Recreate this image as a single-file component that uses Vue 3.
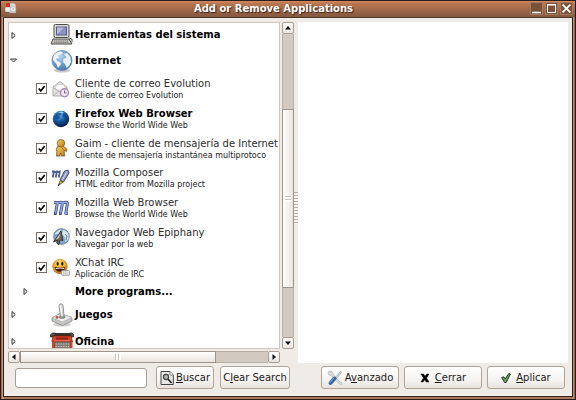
<script setup>
import { ref } from 'vue'

const search = ref('')
const programs = ref([
  { id: 'evolution', name: 'Cliente de correo Evolution', note: 'Cliente de correo Evolution', on: true },
  { id: 'firefox', name: 'Firefox Web Browser', note: 'Browse the World Wide Web', on: true, strong: true },
  { id: 'gaim', name: 'Gaim - cliente de mensajería de Internet', note: 'Cliente de mensajería instantánea multiprotoco', on: true },
  { id: 'composer', name: 'Mozilla Composer', note: 'HTML editor from Mozilla project', on: true },
  { id: 'mozilla', name: 'Mozilla Web Browser', note: 'Browse the World Wide Web', on: true },
  { id: 'epiphany', name: 'Navegador Web Epiphany', note: 'Navegar por la web', on: true },
  { id: 'xchat', name: 'XChat IRC', note: 'Aplicación de IRC', on: true },
])
</script>

<template>
  <div class="window">
    <header class="titlebar">
      <svg class="app-icon" viewBox="0 0 12 12" width="12" height="12" aria-hidden="true">
        <path d="M4 1h5l2 2v8H4z" fill="#ddd9d4" stroke="#8c8580" stroke-width=".6" />
        <rect x="1" y="1" width="4" height="5" fill="#d33226" />
        <rect x="0" y="5" width="6" height="5" rx="1" fill="#eee" stroke="#777" stroke-width=".5" />
        <circle cx="8.2" cy="7" r="2.6" fill="#f5f3f1" stroke="#aaa29c" stroke-width=".6" />
        <circle cx="8.2" cy="7" r=".8" fill="#9a918a" />
      </svg>
      <h1>Add or Remove Applications</h1>
      <div class="controls">
        <button type="button" aria-label="Minimize"><svg viewBox="0 0 11 11" width="11" height="11"><path d="M1 9.500h9" stroke="#fff" stroke-width="1.500" /></svg></button>
        <button type="button" aria-label="Maximize"><svg viewBox="0 0 11 11" width="11" height="11"><path d="M1.500 2v7.500h8V2" fill="none" stroke="#fff" /><path d="M1 1.800h9" stroke="#fff" stroke-width="1.500" /></svg></button>
        <button type="button" aria-label="Close"><svg viewBox="0 0 11 11" width="11" height="11"><path d="M2.200 2.200l6.600 6.600M8.800 2.200l-6.600 6.600" stroke="#fff" stroke-width="1.800" stroke-linecap="square" /></svg></button>
      </div>
    </header>

    <main class="client">
      <div class="panes">
        <section class="browser">
          <ul class="tree">
            <li class="category first">
              <button type="button" class="expander" aria-label="Expand"><svg viewBox="0 0 9 9" width="9" height="9"><path d="M3 1.500v6L6.200 4.500z" fill="#fff" stroke="#333" /></svg></button>
              <svg class="cat-icon" viewBox="0 0 24 24" width="24" height="24" aria-hidden="true">
                <path d="M3 16h16l3 5H1z" fill="#c9c7c3" stroke="#4d4b49" />
                <path d="M4 18h14M4 19.700h15" stroke="#7c7a77" stroke-dasharray="1.500 .6" />
                <path d="M19 15l3 1v3" fill="none" stroke="#555" />
                <rect x="4" y="1.500" width="15" height="13" rx="1.500" fill="#dcdad6" stroke="#4d4b49" />
                <rect x="6.500" y="4" width="10" height="8" fill="#8d92c4" stroke="#5a5d86" />
                <path d="M7 11.500V4.500h7z" fill="#b9bce0" />
              </svg>
              <strong>Herramientas del sistema</strong>
            </li>
            <li class="branch">
              <div class="category">
                <button type="button" class="expander" aria-label="Collapse"><svg viewBox="0 0 9 9" width="9" height="9"><path d="M1.500 3h6L4.500 6z" fill="#fff" stroke="#333" /></svg></button>
                <svg class="cat-icon" viewBox="0 0 24 24" width="24" height="24" aria-hidden="true">
                  <defs>
                    <radialGradient id="net" cx=".4" cy=".3" r=".75"><stop offset="0" stop-color="#b9d6ee" /><stop offset=".55" stop-color="#6c9ccb" /><stop offset="1" stop-color="#3f6ea6" /></radialGradient>
                  </defs>
                  <ellipse cx="12" cy="21.500" rx="8" ry="2" fill="#c9c9c9" />
                  <circle cx="12" cy="11.500" r="10" fill="url(#net)" stroke="#6888ab" stroke-width=".8" />
                  <path d="M3.500 7Q6 2.500 11 2.500L13 4 10 6 8 6.500 9 9 6 9.500 7 12 10 13 11 15 8 19 6.500 15 3 11z" fill="#edf3f8" />
                  <path d="M14 5l3-1 3.500 4 .5 5-2 4-2.500 2L15 15l-2-2 .5-3 3-1.500z" fill="#e8f0f7" />
                </svg>
                <strong>Internet</strong>
              </div>

              <ul class="programs">
                <li v-for="p in programs" :key="p.id">
                  <label class="program">
                    <span class="check">
                      <input v-model="p.on" type="checkbox" />
                      <svg v-if="p.on" viewBox="0 0 11 11" width="11" height="11" aria-hidden="true"><path d="M2.800 5.500l2 2.500L8.700 3" fill="none" stroke="#000" stroke-width="1.700" /></svg>
                    </span>

                    <svg v-if="p.id === 'evolution'" viewBox="0 0 18 18" width="18" height="18" aria-hidden="true">
                      <path d="M1 7l7-5.500L15 7v9H1z" fill="#e4e3e1" stroke="#a09e9b" stroke-width=".8" />
                      <path d="M3.500 7L6 4.500h5L13 7v3H3.500z" fill="#fafafa" stroke="#c5c3c0" stroke-width=".5" />
                      <path d="M1 7.500l7 4.500 7-4.500M1 16l6-5" fill="none" stroke="#aaa8a5" stroke-width=".8" />
                      <circle cx="12.500" cy="12.800" r="4" fill="#eee8f3" stroke="#a58bb0" stroke-width="1.400" />
                      <path d="M12.500 10.500V13h2" fill="none" stroke="#55405e" stroke-width=".8" />
                    </svg>
                    <svg v-else-if="p.id === 'firefox'" viewBox="0 0 18 18" width="18" height="18" aria-hidden="true">
                      <defs>
                        <radialGradient id="fx" cx=".4" cy=".25" r=".75"><stop offset="0" stop-color="#5fb2ec" /><stop offset=".45" stop-color="#1c66b4" /><stop offset="1" stop-color="#06163f" /></radialGradient>
                      </defs>
                      <circle cx="9" cy="9" r="8.200" fill="url(#fx)" />
                      <path d="M2.500 6Q5 2 8 2.500L9.500 4 7.500 6 8 8 5 9.500 3 8z" fill="#0b3774" opacity=".6" />
                      <path d="M12 2.800l3 3-1 3-2.500-1.500L10.500 5zM8 11l4 1 1 2-3 2.500z" fill="#0b3774" opacity=".6" />
                      <path d="M6 2.200l4-.7 2 .7-2 1.300z" fill="#8ed0f5" />
                    </svg>
                    <svg v-else-if="p.id === 'gaim'" viewBox="0 0 18 18" width="18" height="18" aria-hidden="true">
                      <defs>
                        <linearGradient id="gm" x1="0" y1="0" x2="1" y2="1"><stop offset="0" stop-color="#f5cf68" /><stop offset="1" stop-color="#b97a16" /></linearGradient>
                      </defs>
                      <ellipse cx="9" cy="17" rx="5" ry="1" fill="#ccc" />
                      <path d="M5.500 7.500l6-.2 3.500 3-.5 2-2.500-.8.500 5.200H9.700L8.700 14l-1 2.800H4.500l.5-5-1-.800z" fill="url(#gm)" stroke="#77500d" stroke-width=".8" />
                      <circle cx="9" cy="4.200" r="3.700" fill="url(#gm)" stroke="#8c6215" stroke-width=".8" />
                      <path d="M9.500 8.500l2 2" stroke="#77500d" stroke-width=".7" />
                    </svg>
                    <svg v-else-if="p.id === 'composer'" viewBox="0 0 18 18" width="18" height="18" aria-hidden="true">
                      <path d="M0 2.500h1.800l-1 6M1.800 3.500l3-1-1 6M4.800 3.500l3-1-1 6" fill="none" stroke="#4d5e92" stroke-width="1.800" />
                      <path d="M12.500 2l3.500-1L17 4 11.500 13 8 11z" fill="#8792bd" stroke="#353f69" stroke-width=".9" />
                      <path d="M15 2.500L10 11.500" stroke="#dfe4f4" />
                      <path d="M8 11.500L11.200 13l-4.700 3.500z" fill="#e1b23d" stroke="#4c451e" stroke-width=".7" />
                      <path d="M6 17l1.500-2.500" stroke="#222" />
                    </svg>
                    <svg v-else-if="p.id === 'mozilla'" viewBox="0 0 18 18" width="18" height="18" aria-hidden="true">
                      <path d="M2 3.500h3.500L3.500 14.500H2M5 4.500q4-2 5.500-.5L8.500 14.500H7M10 4.500q4-2 5.500-.5L13.800 14.500h2" fill="none" stroke="#33478e" stroke-width="3" stroke-linejoin="round" />
                      <path d="M2 3.500h3.500L3.500 14.500M5 4.500q4-2 5.500-.5L8.500 14.500M10 4.500q4-2 5.500-.5L13.800 14.500h1.500" fill="none" stroke="#96a8e2" stroke-width="1.500" />
                    </svg>
                    <svg v-else-if="p.id === 'epiphany'" viewBox="0 0 18 18" width="18" height="18" aria-hidden="true">
                      <circle cx="9.500" cy="8.500" r="7.800" fill="#86a9cb" stroke="#506c8b" stroke-width=".8" />
                      <path d="M3 6q2-4 6-4.500L7 6zM11 1.500q4 1.500 5.500 5V11l-3 3-1-5L10 6z" fill="#d8e4ee" />
                      <path d="M13 6l2 2-1 4" fill="none" stroke="#5a7ea4" />
                      <path d="M9 3l2 9.500-3-.500-1 4.500-2-1 .5-3.500L1.500 14z" fill="#6c675f" stroke="#26262a" stroke-width=".8" />
                      <path d="M8.500 5l-5 7L7 10z" fill="#d8d0bf" />
                    </svg>
                    <svg v-else viewBox="0 0 18 18" width="18" height="18" aria-hidden="true">
                      <defs>
                        <radialGradient id="xc" cx=".45" cy=".25" r=".8"><stop offset="0" stop-color="#ffe06a" /><stop offset=".6" stop-color="#efa51f" /><stop offset="1" stop-color="#a75f0a" /></radialGradient>
                      </defs>
                      <circle cx="8" cy="8.500" r="7.300" fill="url(#xc)" stroke="#9a6a1d" stroke-width=".5" />
                      <ellipse cx="5.700" cy="5.700" rx="1.100" ry="2" fill="#2b1d08" />
                      <ellipse cx="10.300" cy="5.700" rx="1.100" ry="2" fill="#2b1d08" />
                      <path d="M2.500 8.800q5.500 2 11 0-.8 5-5.500 5t-5.500-5z" fill="#3d1c0b" />
                      <path d="M3.500 9.800q4.500 1.200 9 0l-.5 1.200H4z" fill="#fff" />
                      <rect x="9.500" y="12.500" width="8" height="4.800" rx="1" fill="#eee" stroke="#8c8a88" stroke-width=".8" />
                      <path d="M11 14h5M11 15.800h5" stroke="#999" stroke-width=".8" stroke-dasharray="1.200 .6" />
                    </svg>

                    <span class="text">
                      <span class="name" :class="{ strong: p.strong }">{{ p.name }}</span>
                      <span class="note">{{ p.note }}</span>
                    </span>
                  </label>
                </li>
              </ul>
              <div class="category more">
                <button type="button" class="expander" aria-label="Expand"><svg viewBox="0 0 9 9" width="9" height="9"><path d="M3 1.500v6L6.200 4.500z" fill="#fff" stroke="#333" /></svg></button>
                <strong>More programs...</strong>
              </div>
            </li>
            <li class="category">
              <button type="button" class="expander" aria-label="Expand"><svg viewBox="0 0 9 9" width="9" height="9"><path d="M3 1.500v6L6.200 4.500z" fill="#fff" stroke="#333" /></svg></button>
              <svg class="cat-icon" viewBox="0 0 24 24" width="24" height="24" aria-hidden="true">
                <ellipse cx="12" cy="21.500" rx="9" ry="2" fill="#d0d0d0" />
                <path d="M2 15l8-4.500 12 4v3.500l-9.500 4.500L2 18z" fill="#c7c7c5" stroke="#8a8a88" stroke-width=".8" />
                <path d="M2 15l8-4.500 12 4-9.500 4.500z" fill="#eeeeec" stroke="#9c9c9a" stroke-width=".6" />
                <ellipse cx="12" cy="14" rx="3.500" ry="1.800" fill="#8c8c8a" />
                <path d="M10.500 14L9 3q0-2.200 2-2.200T13.200 3l.8 11z" fill="#d9d9d7" stroke="#828280" stroke-width=".8" />
                <path d="M10.500 2.500l1.300 10" stroke="#fff" />
                <circle cx="7" cy="14.500" r="1.400" fill="#d2564c" />
              </svg>
              <strong>Juegos</strong>
            </li>
            <li class="category">
              <button type="button" class="expander" aria-label="Expand"><svg viewBox="0 0 9 9" width="9" height="9"><path d="M3 1.500v6L6.200 4.500z" fill="#fff" stroke="#333" /></svg></button>
              <svg class="cat-icon" viewBox="0 0 24 24" width="24" height="24" aria-hidden="true">
                <rect x="4" y="3" width="17" height="3" fill="#333" />
                <path d="M.5 7V4.500l2-1.500h3v3h14V3h2.500l1.500 1.500V7h-2V5.500H3V7z" fill="#55504d" stroke="#26221f" stroke-width=".7" />
                <path d="M3 6h18l1.500 6H2z" fill="#d8432a" stroke="#80200f" stroke-width=".8" />
                <path d="M6 7.500h12v2H6z" fill="#8e2212" />
                <path d="M4 11h16" stroke="#f0876f" />
                <path d="M2 12h20.500V24H2z" fill="#d8432a" />
                <path d="M4.500 12h15.500V24H4.500z" fill="#857a73" stroke="#554943" stroke-width=".7" />
                <path d="M5.500 14h14M5.500 16.500h14M5.500 19h14M5.500 21.500h14" stroke="#c9c2bc" stroke-width="1.200" stroke-dasharray="1.500 1" />
              </svg>
              <strong>Oficina</strong>
            </li>
          </ul>

          <div class="vbar">
            <button type="button" aria-label="Up"><svg viewBox="0 0 8 8" width="8" height="8"><path d="M4 2L7 5.500H1z" fill="#111" /></svg></button>
            <div class="track"><div class="thumb"><i></i></div></div>
            <button type="button" aria-label="Down"><svg viewBox="0 0 8 8" width="8" height="8"><path d="M1 2.500h6L4 6z" fill="#111" /></svg></button>
          </div>

          <div class="hbar">
            <button type="button" aria-label="Left"><svg viewBox="0 0 8 8" width="8" height="8"><path d="M5.500 1v6L2 4z" fill="#111" /></svg></button>
            <div class="track"><div class="thumb"><i></i></div></div>
            <button type="button" aria-label="Right"><svg viewBox="0 0 8 8" width="8" height="8"><path d="M2.500 1v6L6 4z" fill="#111" /></svg></button>
          </div>
        </section>
        <div class="splitter"><i></i></div>
        <section class="details" aria-label="Details"></section>
      </div>

      <form class="actions" @submit.prevent>
        <input v-model="search" type="text" aria-label="Buscar" />
        <button type="submit" class="btn find">
          <svg viewBox="0 0 14 14" width="14" height="14" aria-hidden="true">
            <path d="M1 .5h9L13.300 4v9.500H1z" fill="#e9e8e6" stroke="#444" />
            <path d="M10 .5V4h3" fill="#fff" stroke="#666" stroke-width=".7" />
            <circle cx="6" cy="6" r="2.600" fill="#a9b5a8" stroke="#444" stroke-width="1.100" />
            <path d="M8 8l3.500 4" stroke="#222" stroke-width="1.700" />
          </svg>
          <span><u>B</u>uscar</span>
        </button>
        <button type="button" class="btn clear"><span>C<u>l</u>ear Search</span></button>
        <button type="button" class="btn wide push">
          <svg viewBox="0 0 16 16" width="16" height="16" aria-hidden="true">
            <path d="M2 1l3 .5L6 4l7 8 1.500.5.5 2-2.500-.5L4.500 6 2 5l-1-2z" fill="#d6d9dc" stroke="#b1b7bc" stroke-width=".7" />
            <path d="M14.500 1.500l-6 7" stroke="#a6acb2" stroke-width="2" />
            <path d="M14.500 1.500l-6 7" stroke="#e9ecee" stroke-width=".8" />
            <path d="M7.500 8.500L3.500 13" stroke="#3c66a0" stroke-width="4" stroke-linecap="round" />
            <path d="M7 8l-4.500 5" stroke="#7fa5d6" stroke-linecap="round" />
          </svg>
          <span>A<u>v</u>anzado</span>
        </button>
        <button type="button" class="btn wide gap">
          <svg viewBox="0 0 10 10" width="10" height="10" aria-hidden="true"><path d="M1 1h2.500L5 3.200 6.800 1H9L6.500 5 9 9H6.200L4.800 6.700 3 9H1l2.500-4z" fill="#000" stroke="#000" stroke-width=".5" /></svg>
          <span><u>C</u>errar</span>
        </button>
        <button type="button" class="btn wide gap">
          <svg viewBox="0 0 10 10" width="10" height="10" aria-hidden="true"><path d="M.6 4.600l2.200-.8 1.400 2L7.800.5l1.600.6L5.200 9.500H3.600z" fill="#6a9a62" stroke="#1c2a1b" stroke-width=".9" /></svg>
          <span><u>A</u>plicar</span>
        </button>
      </form>
    </main>
  </div>
</template>

<style>
body { margin: 0; }
</style>

<style scoped>
* { box-sizing: border-box; }

.window {
  display: flex;
  flex-direction: column;
  height: 100vh;
  padding: 0 2px 2px;
  border: 1px solid #2a1c18;
  font: 10px/12px "DejaVu Sans", sans-serif;
  color: #1a1a1a;
  background: linear-gradient(90deg, #8a5a44, #dba98a 2px, #a97559 3px, #a97559 calc(100% - 3px), #c99a80 calc(100% - 2px), #8a5a44);
  overflow: hidden;
}
button { font: inherit; color: inherit; padding: 0; margin: 0; }
svg { display: block; flex: none; }
ul { list-style: none; margin: 0; padding: 0; }

.titlebar {
  display: flex;
  align-items: flex-start;
  flex: none;
  height: 16px;
  margin: 0 -2px;
  padding: 1px 2px 0 4px;
  background: linear-gradient(#d08c68, #bd7850 2px, #a3694a 8px, #84583f);
}
h1 {
  flex: 1;
  margin: 0;
  font-size: 10px;
  line-height: 14px;
  text-align: center;
  color: #fff;
  text-shadow: 1px 1px 1px #3c2014;
}
.controls { display: flex; gap: 2px; }
.controls button {
  display: grid;
  place-items: center;
  width: 13px;
  height: 13px;
  border: 1px solid #a67a60;
  background: #7a5139;
}

.client {
  flex: 1;
  min-height: 0;
  display: flex;
  flex-direction: column;
  padding: 4px 4px 7px;
  border: 1px solid #33221a;
  border-top-color: #4c3629;
  background: #efebe7;
}
.panes { flex: 1; min-height: 0; display: flex; }
.browser {
  flex: 0 0 51%;
  min-width: 0;
  display: grid;
  grid-template-columns: minmax(0, 1fr) 12px;
  grid-template-rows: minmax(0, 1fr) 12px;
  gap: 2px;
}
.tree {
  overflow: hidden;
  background: #fff;
  border: 1px solid #cfc5bb;
}
.category {
  display: grid;
  grid-template-columns: 41px 25px 1fr;
  align-items: center;
  height: 27px;
}
.category.first { height: 24px; }
.category strong { grid-column: 3; white-space: nowrap; color: #000; }
.expander {
  width: 9px;
  height: 9px;
  border: 0;
  background: none;
}
.more { height: 19px; }
.more .expander { margin-left: 12px; }

.programs {
  display: grid;
  grid-template-rows: repeat(7, 1fr);
  height: 208px;
}
.programs li { display: flex; align-items: center; }
.program {
  display: grid;
  grid-template-columns: 11px 18px auto;
  column-gap: 5px;
  align-items: center;
  padding-left: 27px;
}
.check { display: grid; }
.check input, .check svg { grid-area: 1 / 1; }
.check svg { pointer-events: none; }
.check input {
  appearance: none;
  width: 11px;
  height: 11px;
  margin: 0;
  border: 1px solid #77706a;
  background: #fff;
}
.text { display: flex; flex-direction: column; padding-top: 3px; white-space: nowrap; }
.name { color: #2c2c2c; }
.name.strong { font-weight: bold; color: #000; }
.note { font-size: 8px; }

.vbar, .hbar { display: flex; }
.vbar { flex-direction: column; }
.vbar button, .hbar button {
  display: grid;
  place-items: center;
  flex: none;
  width: 12px;
  height: 12px;
  border: 1px solid #a99e94;
  border-radius: 2px;
  background: linear-gradient(#fff, #e9e4df);
}
.track {
  flex: 1;
  display: flex;
  background: #d2c9c0;
  border: 0 solid #b9aea4;
}
.vbar .track { flex-direction: column; border-width: 0 1px; justify-content: flex-end; }
.thumb {
  display: grid;
  place-items: center;
  border: 1px solid #a0958b;
  background: linear-gradient(90deg, #fff, #e9e4df);
}
.vbar .thumb { height: 59%; margin: 0 -1px 49px; }
.vbar .thumb i { width: 6px; height: 6px; background: repeating-linear-gradient(#c9c0b7 0 1px, #fff 1px 3px); }
.hbar .track { border-width: 1px 0; }
.hbar .thumb { width: 79%; margin: -1px 0; background: linear-gradient(#fff, #e9e4df); }
.hbar .thumb i { width: 6px; height: 6px; background: repeating-linear-gradient(90deg, #c9c0b7 0 1px, #fff 1px 3px); }

.splitter { flex: none; width: 4px; display: grid; align-items: center; }
.splitter i { height: 32px; margin-top: 30px; background: repeating-linear-gradient(#b9b0a7 0 1px, #f7f4f1 1px 3px); }
.details { flex: 1; background: #fff; }

.actions {
  display: flex;
  align-items: center;
  flex: none;
  padding: 3px 3px 0 7px;
}
.actions input {
  width: 132px;
  height: 20px;
  margin-right: 9px;
  padding: 0 4px;
  font: inherit;
  border: 1px solid #a99e94;
  border-radius: 3px;
  background: #fff;
}
.btn {
  display: flex;
  align-items: center;
  justify-content: center;
  gap: 2px;
  height: 23px;
  border: 1px solid #b3a394;
  border-radius: 3px;
  background: linear-gradient(#fff, #f6f4f2 60%, #e8e2dc);
  white-space: nowrap;
}
.find { width: 58px; margin-right: 6px; }
.clear { width: 70px; }
.wide { width: 78px; }
.push { margin-left: auto; }
.gap { gap: 5px; margin-left: 5px; }
</style>
